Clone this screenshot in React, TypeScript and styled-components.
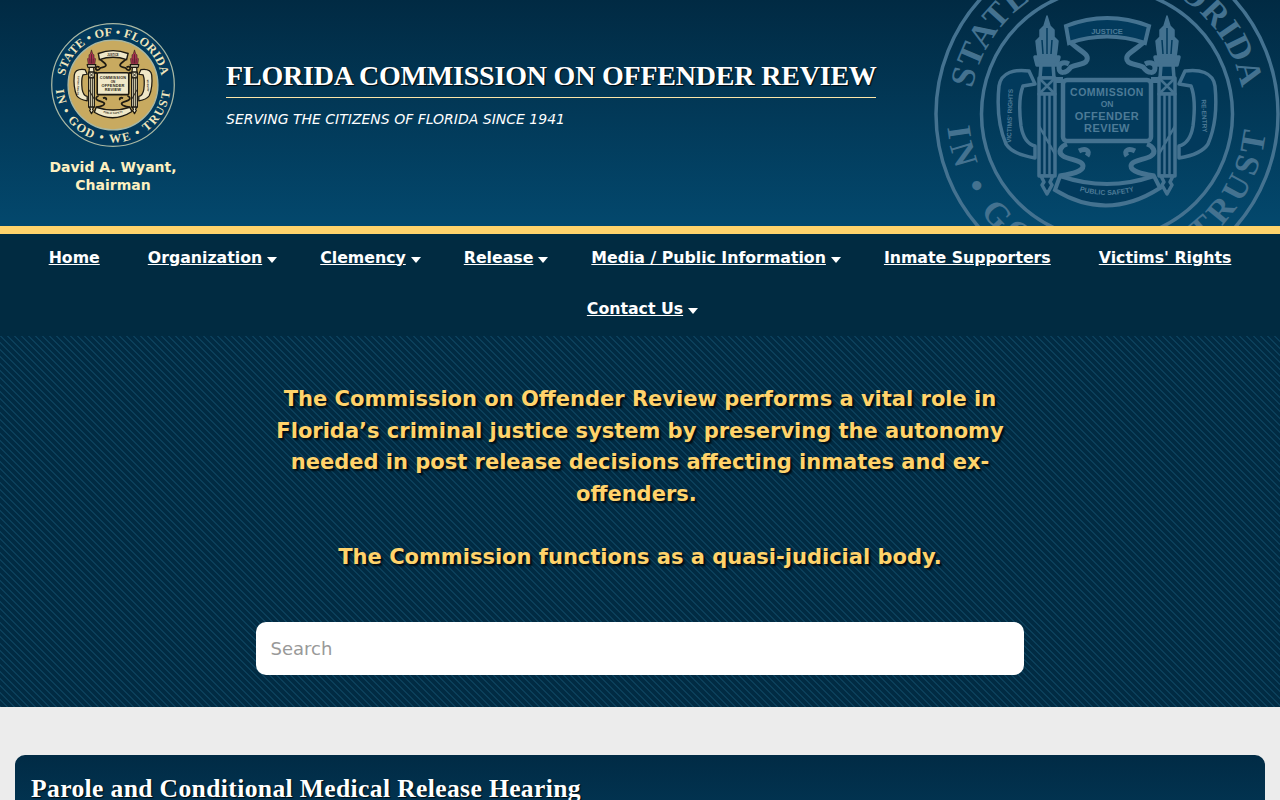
import React from 'react';
import styled, { createGlobalStyle } from 'styled-components';

const GlobalStyle = createGlobalStyle`
  html, body {
    margin: 0;
    padding: 0;
    background: #ececec;
    font-family: "DejaVu Sans", sans-serif;
    overflow-x: hidden;
  }
  * { box-sizing: border-box; }
`;

const Header = styled.header`
  position: relative;
  height: 234px;
  display: flex;
  align-items: flex-start;
  overflow: hidden;
  background: linear-gradient(180deg, #012a43 0%, #03486d 100%);
  border-bottom: 8px solid #ffd36b;
`;

const Brand = styled.div`
  width: 226px;
  padding-top: 23px;
  display: flex;
  flex-direction: column;
  align-items: center;
`;

const SmallSealSvg = styled.svg`
  width: 124px;
  height: 124px;
  display: block;
`;

const BigSealSvg = styled.svg`
  position: absolute;
  left: 934px;
  top: -59px;
  width: 346px;
  height: 346px;
`;

const Chairman = styled.div`
  width: 150px;
  margin-top: 11px;
  text-align: center;
  font-size: 14px;
  line-height: 18px;
  font-weight: 700;
  color: #fdf0c0;
`;

const Heading = styled.div`
  padding-top: 59px;
`;

const Title = styled.h1`
  margin: 0;
  width: 650px;
  padding-bottom: 5px;
  border-bottom: 1px solid #fde6a8;
  font-family: "Liberation Serif", serif;
  font-size: 28px;
  line-height: 33px;
  font-weight: 700;
  letter-spacing: -0.2px;
  white-space: nowrap;
  color: #fff;
  text-shadow: 1px 1px 1px rgba(0, 0, 0, 0.85);
`;

const Tagline = styled.p`
  margin: 12px 0 0;
  font-size: 14px;
  line-height: 18px;
  font-style: italic;
  color: #fff;
`;

const Nav = styled.nav`
  background: #012b41;
  display: flex;
  flex-wrap: wrap;
  justify-content: center;
`;

const NavItem = styled.a`
  display: flex;
  align-items: center;
  padding: 11.5px 24px 15.5px;
  font-size: 15.76px;
  line-height: 24px;
  font-weight: 700;
  color: #fff;
  text-decoration: underline;
`;

const Caret = styled.span`
  width: 0;
  height: 0;
  margin: 5px -5px 0 5px;
  border-left: 5px solid transparent;
  border-right: 5px solid transparent;
  border-top: 6px solid #fff;
`;

const Hero = styled.section`
  height: 371px;
  padding-top: 48px;
  display: flex;
  flex-direction: column;
  align-items: center;
  background-color: #012b43;
  background-image: linear-gradient(
    45deg,
    #0b3f5a 12%,
    #012b43 12%,
    #012b43 50%,
    #0b3f5a 50%,
    #0b3f5a 62%,
    #012b43 62%,
    #012b43 100%
  );
  background-size: 7px 7px;
`;

const Mission = styled.p`
  width: 768px;
  height: 192px;
  margin: 0;
  padding: 0 4px;
  text-align: center;
  font-size: 21px;
  line-height: 31.5px;
  font-weight: 700;
  color: #ffd36b;
  text-shadow: 2px 2px 2px rgba(0, 0, 0, 0.8);
`;

const SearchInput = styled.input`
  width: 768px;
  height: 53px;
  margin-top: 46px;
  padding: 0 14.5px;
  border: none;
  border-radius: 10px;
  outline: none;
  background: #fff;
  font-family: inherit;
  font-size: 18px;
  color: #333;
  &::placeholder { color: #999; opacity: 1; }
`;

const Main = styled.main`
  padding: 48px 15px 32px;
`;

const Card = styled.article`
  height: 180px;
  padding: 17px 16px;
  border-radius: 10px;
  background: linear-gradient(180deg, #012b45 0%, #03486d 100%);
`;

const CardTitle = styled.h2`
  margin: 0;
  font-family: "Liberation Serif", serif;
  font-size: 25.6px;
  line-height: 34px;
  font-weight: 700;
  letter-spacing: 0.36px;
  color: #fff;
  text-shadow: 1px 1px 1px rgba(0, 0, 0, 0.85);
`;

type Palette = {
  disc: string;
  ring: string;
  ringLine: string;
  ringText: string;
  part: string;
  line: string;
  flame: string;
  label: string;
};

const colour: Palette = {
  disc: '#c8aa60',
  ring: '#02395b',
  ringLine: '#a9b8a4',
  ringText: '#f0e6bd',
  part: '#f0e8c8',
  line: '#1d1a12',
  flame: '#a93350',
  label: '#2a2414',
};

const ghost: Palette = {
  disc: 'none',
  ring: 'none',
  ringLine: '#447290',
  ringText: '#447290',
  part: '#023a5c',
  line: '#447290',
  flame: '#447290',
  label: '#4d7b97',
};

// one side of the crest, the other side is this mirrored
const CrestSide = ({ p }: { p: Palette }) => (
  <g stroke={p.line} strokeWidth={3.5} strokeLinejoin="round" fill={p.part}>
    <path d="M-37,-72 C-26,-62 -18,-60 -20,-54 C-22,-49 -30,-50 -36,-47 C-41,-40 -48,-40 -48,-46 C-48,-52 -42,-52 -38,-50" fill="none" strokeWidth={5} />
    <path d="M-47,62 C-36,60 -24,58 -24,52 C-24,46 -38,46 -44,42 C-50,38 -46,32 -40,30" fill="none" strokeWidth={5} />
    <path d="M-20,42 C-16,36 -22,34 -28,37" fill="none" strokeWidth={5} />
    <path d="M-78,-43 C-92,-45 -106,-42 -108,-28 C-110,-8 -108,14 -101,30 C-96,38 -84,42 -72,44 L-72,32 C-80,30 -84,24 -86,12 C-88,-4 -88,-18 -84,-28 L-72,-30 Z" />
    <path d="M-52,-34 L-44,-34" strokeWidth={6} />
    <path d="M-60,-98 L-57,-88 L-53,-84 L-53,-77 L-49,-73 L-50,-64 L-51,-57 L-69,-57 L-70,-64 L-71,-73 L-67,-77 L-67,-84 L-63,-88 Z" fill={p.flame} strokeWidth={1.5} />
    <path d="M-60,-86 L-60,-60 M-65,-74 L-64,-60 M-55,-74 L-56,-60" fill="none" stroke={p.ring === 'none' ? p.part : p.line} strokeWidth={1.5} />
    <path d="M-72,-57 L-48,-57 L-50,-49 L-70,-49 Z" fill={p.ring === 'none' ? p.line : p.part} />
    <path d="M-66,-49 L-54,-49 L-53,-36 L-67,-36 Z" />
    <rect x={-68} y={-36} width={16} height={16} />
    <path d="M-68,-36 L-52,-20 M-52,-36 L-68,-20" fill="none" strokeWidth={2.5} />
    <rect x={-68} y={-20} width={16} height={82} />
    <path d="M-62.5,-20 L-62.5,62 M-57.5,-20 L-57.5,62 M-68,12 L-52,40" fill="none" strokeWidth={2.5} />
    <path d="M-66,62 L-54,62 L-57,68 L-55,71 L-60,80 L-65,71 L-63,68 Z" />
  </g>
);

const Seal = ({ p, as: Svg }: { p: Palette; as: typeof SmallSealSvg }) => (
  <Svg viewBox="-173 -173 346 346" aria-hidden="true">
    <defs>
      <path id={`top-${p.ring}`} d="M-137,0 A137,137 0 0 1 137,0" />
      <path id={`bot-${p.ring}`} d="M-160,0 A160,160 0 0 0 160,0" />
      <path id={`safety-${p.ring}`} d="M-36,74 Q0,88 36,74" />
    </defs>
    <circle r={171} fill={p.ring} stroke={p.ringLine} strokeWidth={3.5} />
    <circle r={125.5} fill={p.disc} stroke={p.ringLine} strokeWidth={3.5} />
    <g fontFamily='"Liberation Serif", serif' fontWeight={700} fontSize={34} fill={p.ringText}>
      <text letterSpacing={0.6} textAnchor="middle">
        <textPath href={`#top-${p.ring}`} startOffset="50%">STATE • OF • FLORIDA</textPath>
      </text>
      <text letterSpacing={5} textAnchor="middle">
        <textPath href={`#bot-${p.ring}`} startOffset="50%">IN • GOD • WE • TRUST</textPath>
      </text>
    </g>
    <CrestSide p={p} />
    <g transform="scale(-1,1)">
      <CrestSide p={p} />
    </g>
    <path d="M-41,-88 Q0,-104 42,-88 L38,-71 Q0,-84 -38,-71 Z" fill={p.part} stroke={p.line} strokeWidth={4} />
    <path d="M-47,62 Q0,78 47,62 L53,74 Q0,108 -52,76 Z" fill={p.part} stroke={p.line} strokeWidth={4} />
    <rect x={-44} y={-34} width={88} height={61} rx={4} fill={p.part} stroke={p.line} strokeWidth={4.5} />
    <g fontFamily='"Liberation Sans", sans-serif' fontWeight={700} fill={p.label} textAnchor="middle">
      <text y={-18} fontSize={10.5} letterSpacing={0.5}>COMMISSION</text>
      <text y={-7} fontSize={8.5}>ON</text>
      <text y={6} fontSize={11} letterSpacing={0.5}>OFFENDER</text>
      <text y={18} fontSize={11} letterSpacing={0.4}>REVIEW</text>
      <text y={-80} fontSize={7.5}>JUSTICE</text>
      <text fontSize={7}>
        <textPath href={`#safety-${p.ring}`} startOffset="50%">PUBLIC SAFETY</textPath>
      </text>
      <text transform="translate(-95,2) rotate(-88)" fontSize={6.5}>VICTIMS' RIGHTS</text>
      <text transform="translate(95,2) rotate(88)" fontSize={6.5}>RE-ENTRY</text>
    </g>
  </Svg>
);

const navItems = [
  { label: 'Home' },
  { label: 'Organization', menu: true },
  { label: 'Clemency', menu: true },
  { label: 'Release', menu: true },
  { label: 'Media / Public Information', menu: true },
  { label: 'Inmate Supporters' },
  { label: "Victims' Rights" },
  { label: 'Contact Us', menu: true },
];

const App = () => {
  return (
    <>
      <GlobalStyle />
      <Header>
        <Brand>
          <Seal p={colour} as={SmallSealSvg} />
          <Chairman>David A. Wyant, Chairman</Chairman>
        </Brand>
        <Heading>
          <Title>FLORIDA COMMISSION ON OFFENDER REVIEW</Title>
          <Tagline>SERVING THE CITIZENS OF FLORIDA SINCE 1941</Tagline>
        </Heading>
        <Seal p={ghost} as={BigSealSvg} />
      </Header>
      <Nav>
        {navItems.map((item) => (
          <NavItem key={item.label} href="#">
            {item.label}
            {item.menu && <Caret />}
          </NavItem>
        ))}
      </Nav>
      <Hero>
        <Mission>
          The Commission on Offender Review performs a vital role in Florida’s criminal justice
          system by preserving the autonomy needed in post release decisions affecting inmates and
          ex-offenders.&nbsp;
          <br />
          <br />
          The Commission functions as a quasi-judicial body.
        </Mission>
        <SearchInput placeholder="Search" />
      </Hero>
      <Main>
        <Card>
          <CardTitle>Parole and Conditional Medical Release Hearing</CardTitle>
        </Card>
      </Main>
    </>
  );
};

export default App;
